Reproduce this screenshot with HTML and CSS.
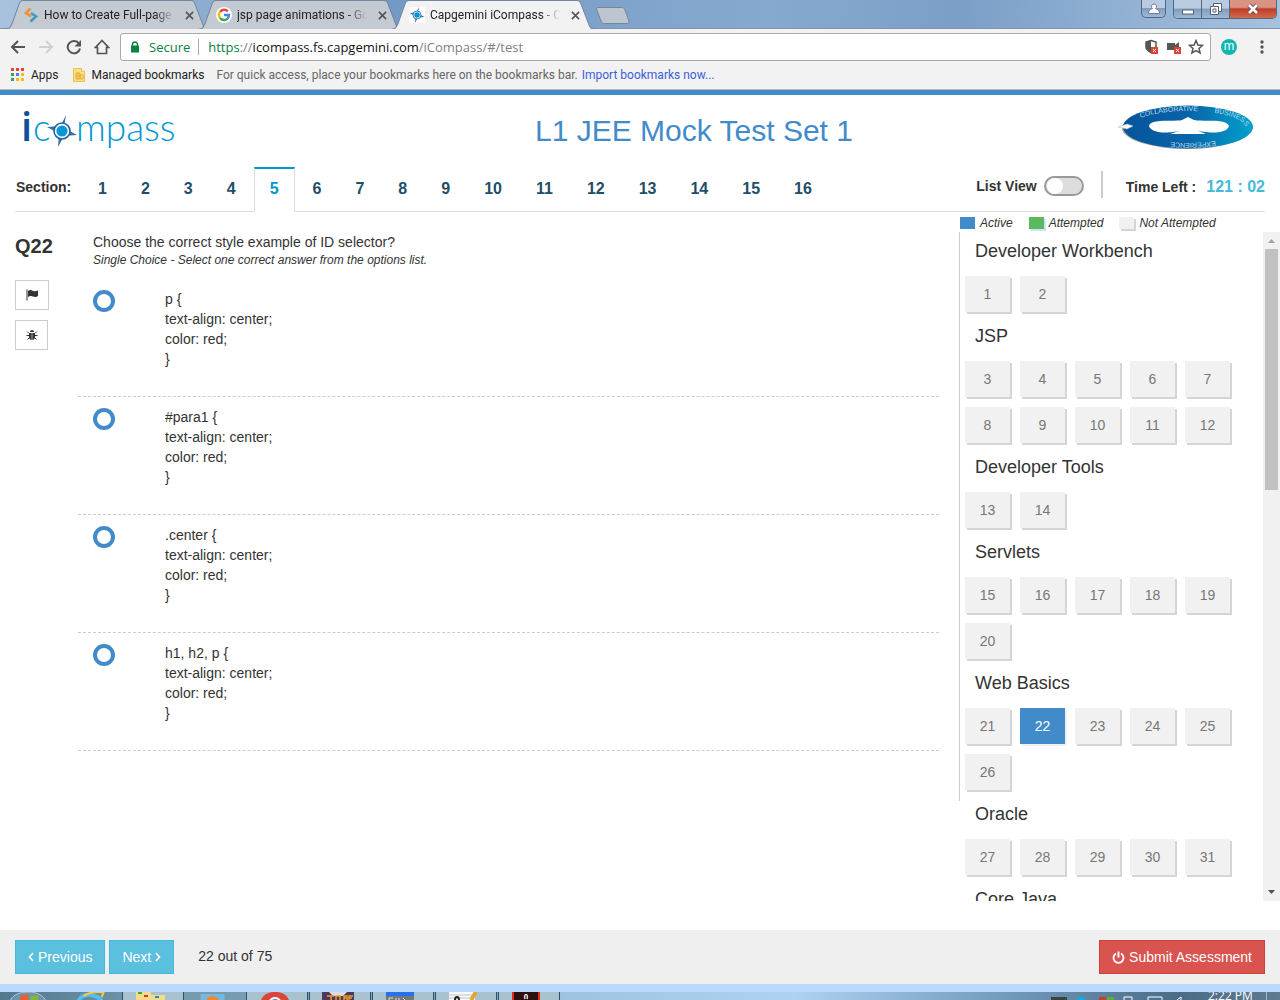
FILE: index.html
```html
<!DOCTYPE html>
<html lang="en">
<head>
<meta charset="utf-8">
<title>Capgemini iCompass - L1 JEE Mock Test Set 1</title>
<link rel="stylesheet" href="styles.css">
</head>
<body>
<svg class="defs" width="0" height="0" aria-hidden="true">
  <defs>
    <symbol id="compass" viewBox="0 0 30 32">
      <path d="M19 0 17 12 13 12ZM30 20 17 21 19 14ZM11 32 12 19 17 21ZM0 12 13 11 11 18Z" fill="#3570a8"/>
      <circle cx="15" cy="16" r="8" fill="#fff" stroke="#2c5f9c" stroke-width="1.6"/>
      <circle cx="15" cy="16" r="5.6" fill="#0098d4"/>
    </symbol>
    <symbol id="cross" viewBox="0 0 10 10"><path d="M1 1 9 9M9 1 1 9" stroke="#555" stroke-width="1.8"/></symbol>
  </defs>
</svg>

<div class="browser">
  <div class="tabstrip">
    <div class="tab tab-first">
      <svg class="tab-shape" viewBox="0 0 204 28" preserveAspectRatio="none"><path d="M0 28.500C4 28 5 27 7 23L14 4C15 1 16 .5 18 .5H186C188 .5 189 1 190 4L198 24C199 27 200 28 204 28.500" fill="#c3cad1" stroke="#73869d"/></svg>
      <svg class="favicon" viewBox="0 0 16 16"><path d="M7.500 1.500 3 6 8 9.500" fill="none" stroke="#f29132" stroke-width="2.600"/><path d="M8 6 13 9.500 7.500 14.500" fill="none" stroke="#3a9cc0" stroke-width="2.600"/></svg>
      <span class="tab-title">How to Create Full-page</span>
      <svg class="tab-close"><use href="#cross"/></svg>
    </div>
    <div class="tab">
      <svg class="tab-shape" viewBox="0 0 204 28" preserveAspectRatio="none"><path d="M0 28.500C4 28 5 27 7 23L14 4C15 1 16 .5 18 .5H186C188 .5 189 1 190 4L198 24C199 27 200 28 204 28.500" fill="#c3cad1" stroke="#73869d"/></svg>
      <svg class="favicon" viewBox="0 0 16 16"><circle cx="8" cy="8" r="8" fill="#fff"/><g fill="none" stroke-width="2.400"><path d="M11.800 4.400A5 5 0 0 0 4 5" stroke="#ea4335"/><path d="M4 5A5 5 0 0 0 4 11" stroke="#fbbc05"/><path d="M4 11A5 5 0 0 0 11.500 11.700" stroke="#34a853"/><path d="M11.500 11.700A5 5 0 0 0 13 8H8" stroke="#4285f4"/></g></svg>
      <span class="tab-title">jsp page animations - Go</span>
      <svg class="tab-close"><use href="#cross"/></svg>
    </div>
    <div class="tab tab-active">
      <svg class="tab-shape" viewBox="0 0 204 28" preserveAspectRatio="none"><path d="M0 28.500C4 28 5 27 7 23L14 4C15 1 16 .5 18 .5H186C188 .5 189 1 190 4L198 24C199 27 200 28 204 28.500" fill="#f2f2f2" stroke="#73869d"/></svg>
      <svg class="favicon favicon-white"><use href="#compass"/></svg>
      <span class="tab-title">Capgemini iCompass - C</span>
      <svg class="tab-close"><use href="#cross"/></svg>
    </div>
    <svg class="new-tab" viewBox="0 0 34 17"><path d="M1 .5H25C27 .5 28 1 29 3L33 14C33 16 32 16.500 31 16.500H9C7 16.500 6 16 5 14L.5 2Z" fill="#bdc6d0" stroke="#74869d"/></svg>
    <div class="window-controls">
      <button class="win user" aria-label="User"><svg width="12" height="12" viewBox="0 0 12 12"><path d="M6 1a2.500 2.500 0 0 1 1.500 4.500C10 6 11.500 8 11.500 10.500H.5C.5 8 2 6 4.500 5.500A2.500 2.500 0 0 1 6 1Z" fill="#fff" stroke="#596a80" stroke-width=".8"/></svg></button>
      <div class="win-group">
        <button class="win" aria-label="Minimize"><svg width="12" height="12" viewBox="0 0 12 12"><rect x=".5" y="7" width="11" height="4" fill="#fff" stroke="#53627a"/></svg></button>
        <button class="win" aria-label="Restore"><svg width="12" height="12" viewBox="0 0 12 12"><path d="M3.500.5H11.500V8.500H8.500V11.500H.5V3.500H3.500Z" fill="#fff" stroke="#53627a"/><path d="M3 6H6V9H3ZM3.500 3.500H8.500V8.500" fill="none" stroke="#53627a"/></svg></button>
        <button class="win win-close" aria-label="Close"><svg width="12" height="12" viewBox="0 0 12 12"><path d="M2 2 10 10M10 2 2 10" stroke="#5c3c48" stroke-width="4.400"/><path d="M2 2 10 10M10 2 2 10" stroke="#fff" stroke-width="2.800"/></svg></button>
      </div>
    </div>
  </div>

  <div class="toolbar">
    <button class="tool" aria-label="Back"><svg viewBox="0 0 16 16"><path d="M15 8H2M8 2 2 8 8 14" fill="none" stroke="#555" stroke-width="2"/></svg></button>
    <button class="tool" aria-label="Forward"><svg viewBox="0 0 16 16"><path d="M1 8H14M8 2 14 8 8 14" fill="none" stroke="#d0d0d0" stroke-width="2"/></svg></button>
    <button class="tool" aria-label="Reload"><svg viewBox="0 0 16 16"><path d="M13 4.500A6.200 6.200 0 1 0 14 9.500" fill="none" stroke="#555" stroke-width="2"/><path d="M15 1V7.500H8.500Z" fill="#555"/></svg></button>
    <button class="tool" aria-label="Home"><svg viewBox="0 0 16 16"><path d="M8 1.500 1.500 8.500H3.500V14.500H12.500V8.500H14.500Z" fill="none" stroke="#555" stroke-width="1.700"/></svg></button>
    <div class="address">
      <svg class="lock" viewBox="0 0 8 12"><path d="M1.500 5V3.500A2.500 2.500 0 0 1 6.500 3.500V5" fill="none" stroke="#0b8043" stroke-width="1.400"/><rect y="4.500" width="8" height="7" fill="#0b8043"/></svg>
      <span class="secure">Secure</span>
      <span class="url"><span class="secure-scheme">https</span>://<span class="host">icompass.fs.capgemini.com</span>/iCompass/#/test</span>
      <svg class="addr-icon" viewBox="0 0 16 16"><path d="M7 1.500 12 3V8C12 10 9 12.500 7 13.500 4 12 2 10 2 8V3Z" fill="#fff" stroke="#555" stroke-width="1.500"/><path d="M7 1V14C4 12 2 10 2 8V3Z" fill="#555"/><rect x="7" y="8" width="7" height="7" fill="#db4437"/><path d="M9 10 12 13M12 10 9 13" stroke="#fff"/></svg>
      <svg class="addr-icon" viewBox="0 0 16 16"><path d="M1 4H9V6L13 3V11H1Z" fill="#555"/><rect x="8" y="8" width="7" height="7" fill="#db4437"/><path d="M10 10 13 13M13 10 10 13" stroke="#fff"/></svg>
      <svg class="addr-icon" viewBox="0 0 16 16"><path d="M8 1.500 9.900 6 14.500 6.400 11 9.500 12.100 14 8 11.600 3.900 14 5 9.500 1.500 6.400 6.100 6Z" fill="none" stroke="#555" stroke-width="1.500"/></svg>
    </div>
    <span class="avatar">m</span>
    <button class="menu" aria-label="Menu"><svg width="4" height="14" viewBox="0 0 4 14" fill="#555"><circle cx="2" cy="2" r="1.700"/><circle cx="2" cy="7" r="1.700"/><circle cx="2" cy="12" r="1.700"/></svg></button>
  </div>

  <div class="bookmarks">
    <svg width="13" height="13" viewBox="0 0 13 13"><path d="M0 0h3v3H0zM5 0h3v3H5zM10 0h3v3h-3z" fill="#ea4335"/><path d="M0 5h3v3H0z" fill="#34a853"/><path d="M5 5h3v3H5z" fill="#4285f4"/><path d="M10 5h3v3h-3zM10 10h3v3h-3zM5 10h3v3H5z" fill="#fbbc05"/><path d="M0 10h3v3H0z" fill="#34a853"/></svg>
    <span class="bookmark-apps">Apps</span>
    <svg width="12" height="14" viewBox="0 0 12 14"><path d="M.5.500H8.500V3H11.500V13.500H.5Z" fill="#fddf7f" stroke="#e9c250"/><path d="M3 5H7V11H3ZM7 7H10V11H7ZM3 8H7M5 5V11" fill="none" stroke="#dfae37"/></svg>
    <span class="bookmark-managed">Managed bookmarks</span>
    <span class="bookmark-hint">For quick access, place your bookmarks here on the bookmarks bar.</span>
    <a class="bookmark-link" href="#import">Import bookmarks now...</a>
  </div>
</div>

<div class="app">
  <header class="app-header">
    <svg class="logo" width="160" height="48" viewBox="0 0 160 48" role="img" aria-label="icompass">
      <text class="logo-i" x="5" y="34">i</text>
      <text class="logo-text" x="17" y="34">c</text>
      <use href="#compass" x="31" y="8" width="30" height="32"/>
      <text class="logo-text" x="60" y="34">mpass</text>
    </svg>
    <h1 class="title">L1 JEE Mock Test Set 1</h1>
    <svg class="badge" width="137" height="46" viewBox="0 0 137 46" role="img" aria-label="Collaborative Business Experience">
      <defs>
        <linearGradient id="oval"><stop offset="0" stop-color="#06549b"/><stop offset=".5" stop-color="#0864a8"/><stop offset="1" stop-color="#00a2cc"/></linearGradient>
        <path id="ring" d="M13 23A57 16 0 0 1 127 23A57 16 0 0 1 13 23"/>
      </defs>
      <ellipse cx="69" cy="24" rx="65" ry="21" fill="#777" opacity=".7"/>
      <ellipse cx="70" cy="23" rx="65" ry="21.500" fill="url(#oval)"/>
      <path d="M0 23 9 20 15 22 9 25Z" fill="#fff" stroke="#bbb" stroke-width=".6"/>
      <path d="M31 22C32 14 57 18 64 16L70 13 76 16C88 18 108 14 111 22 109 31 86 29 78 26L88 30H52L64 26C56 29 34 31 31 22Z" fill="#fff"/>
      <text class="badge-text"><textPath href="#ring" startOffset="14">COLLABORATIVE</textPath></text>
      <text class="badge-text"><textPath href="#ring" startOffset="88">BUSINESS</textPath></text>
      <text class="badge-text"><textPath href="#ring" startOffset="158">EXPERIENCE</textPath></text>
    </svg>
  </header>

  <nav class="sections">
    <span class="sections-label">Section:</span>
    <ul class="section-tabs">
      <li><a href="#s1">1</a></li><li><a href="#s2">2</a></li><li><a href="#s3">3</a></li><li><a href="#s4">4</a></li>
      <li><a class="current" href="#s5">5</a></li><li><a href="#s6">6</a></li><li><a href="#s7">7</a></li><li><a href="#s8">8</a></li>
      <li><a href="#s9">9</a></li><li><a href="#s10">10</a></li><li><a href="#s11">11</a></li><li><a href="#s12">12</a></li>
      <li><a href="#s13">13</a></li><li><a href="#s14">14</a></li><li><a href="#s15">15</a></li><li><a href="#s16">16</a></li>
    </ul>
    <label class="list-view" for="list-view">List View</label>
    <input class="switch" type="checkbox" id="list-view">
    <span class="divider"></span>
    <span class="time-label">Time Left :</span>
    <span class="time">121 : 02</span>
  </nav>

  <main class="content">
    <aside class="question-tools">
      <h2 class="question-number">Q22</h2>
      <button class="icon-button" aria-label="Flag question"><svg width="12" height="12" viewBox="0 0 12 12"><path d="M.5.500H1.500V11.500H.5ZM2 2C4 .5 6 1 7 2 9 2.500 10 2 12 1.500V7C10 8.500 8.500 8 7 7.500 5 6.500 4 7 2 8Z" fill="#333"/></svg></button>
      <button class="icon-button icon-button-small" aria-label="Report a bug"><svg width="12" height="12" viewBox="0 0 12 12"><path d="M4 3A2 2 0 0 1 8 3ZM3 4H5.700V11C4 11 3 9.500 3 8ZM6.300 4H9V8C9 9.500 8 11 6.300 11Z" fill="#333"/><path d="M1 2.500 3 4.500M11 2.500 9 4.500M.5 6.500H3M11.500 6.500H9M1.500 10.500 3.500 8.500M10.500 10.500 8.500 8.500" stroke="#333"/></svg></button>
    </aside>

    <section class="question">
      <div class="prompt">
        <p class="prompt-text">Choose the correct style example of ID selector?</p>
        <p class="prompt-hint">Single Choice - Select one correct answer from the options list.</p>
      </div>
      <div class="option"><input type="radio" name="answer" id="a1"><label for="a1">p {<br>text-align: center;<br>color: red;<br>}</label></div>
      <div class="option"><input type="radio" name="answer" id="a2"><label for="a2">#para1 {<br>text-align: center;<br>color: red;<br>}</label></div>
      <div class="option"><input type="radio" name="answer" id="a3"><label for="a3">.center {<br>text-align: center;<br>color: red;<br>}</label></div>
      <div class="option"><input type="radio" name="answer" id="a4"><label for="a4">h1, h2, p {<br>text-align: center;<br>color: red;<br>}</label></div>
    </section>

    <aside class="overview">
      <div class="legend">
        <span class="swatch swatch-active"></span><span class="legend-text">Active</span>
        <span class="swatch swatch-attempted"></span><span class="legend-text">Attempted</span>
        <span class="swatch swatch-open"></span><span class="legend-text">Not Attempted</span>
      </div>
      <div class="palette">
        <div class="rule"></div>
        <div class="groups">
          <h3>Developer Workbench</h3>
          <div class="numbers"><button>1</button><button>2</button></div>
          <h3>JSP</h3>
          <div class="numbers"><button>3</button><button>4</button><button>5</button><button>6</button><button>7</button><button>8</button><button>9</button><button>10</button><button>11</button><button>12</button></div>
          <h3>Developer Tools</h3>
          <div class="numbers"><button>13</button><button>14</button></div>
          <h3>Servlets</h3>
          <div class="numbers"><button>15</button><button>16</button><button>17</button><button>18</button><button>19</button><button>20</button></div>
          <h3>Web Basics</h3>
          <div class="numbers"><button>21</button><button class="active">22</button><button>23</button><button>24</button><button>25</button><button>26</button></div>
          <h3>Oracle</h3>
          <div class="numbers"><button>27</button><button>28</button><button>29</button><button>30</button><button>31</button></div>
          <h3>Core Java</h3>
        </div>
        <div class="scrollbar">
          <svg class="arrow" viewBox="0 0 17 17"><path d="M5 11H12L8.500 7Z" fill="#a3a3a3"/></svg>
          <div class="thumb"></div>
          <svg class="arrow" viewBox="0 0 17 17"><path d="M5 6H12L8.500 10Z" fill="#505050"/></svg>
        </div>
      </div>
    </aside>
  </main>

  <footer class="footer">
    <button class="btn btn-info"><svg width="6" height="10" viewBox="0 0 6 10"><path d="M5 1 1.500 5 5 9" fill="none" stroke="#fff" stroke-width="1.600"/></svg>Previous</button>
    <button class="btn btn-info">Next<svg width="6" height="10" viewBox="0 0 6 10"><path d="M1 1 4.500 5 1 9" fill="none" stroke="#fff" stroke-width="1.600"/></svg></button>
    <span class="progress">22 out of 75</span>
    <button class="btn btn-danger"><svg width="13" height="13" viewBox="0 0 13 13"><path d="M4 2.500A5 5 0 1 0 9 2.500M6.500 .5V6.500" fill="none" stroke="#fff" stroke-width="1.900"/></svg>Submit Assessment</button>
  </footer>
</div>

<div class="taskbar">
  <svg class="task-icon task-pinned" viewBox="0 0 60 8"><path d="M10 8C13 2 20 0 28 0S42 3 45 8" fill="#6d93b1" stroke="#a9c7dc"/><path d="M19 8 21 3 28 2V8Z" fill="#e8622c"/><path d="M30 4 38 3V8H30Z" fill="#83b63a"/></svg>
  <svg class="task-icon task-pinned" viewBox="0 0 60 8"><path d="M17 9C20 3 26 2 30 3S38 5 40 9" fill="none" stroke="#57bdf0" stroke-width="4"/><path d="M22 4C28 0 38-1 42 1L40 5" fill="none" stroke="#f3cd3d" stroke-width="2"/></svg>
  <div class="task"><svg class="task-icon" viewBox="0 0 60 8"><path d="M13 0H28V3H42V8H13Z" fill="#f4dc8c"/><path d="M15 0h4v2h-4z" fill="#2eaf3c"/><path d="M21 3h4v2h-4z" fill="#d33b27"/><path d="M32 4h4v2h-4z" fill="#3482d4"/></svg></div>
  <svg class="task-icon task-pinned" viewBox="0 0 60 8"><rect x="15" y="2" width="24" height="8" fill="#76b9df"/><circle cx="27" cy="11" r="7" fill="#f08831"/></svg>
  <div class="task"><svg class="task-icon" viewBox="0 0 60 8"><path d="M14 8C17 1 23 0 28 0S39 1 42 8Z" fill="#dc4437"/><circle cx="28" cy="12" r="6" fill="#4285f4" stroke="#fff" stroke-width="2"/></svg></div>
  <div class="task"><svg class="task-icon" viewBox="0 0 60 8"><rect x="12" width="32" height="8" fill="#493b5d"/><path d="M19 0H37L33 4H23Z" fill="#ddd"/><path d="M17 4H24M21 4V8M26 8V4H30V8M37 8V4H34V8M43 4H39V8M34 6H37M39 6H42" fill="none" stroke="#f29a2a" stroke-width="1.500"/></svg></div>
  <div class="task"><svg class="task-icon" viewBox="0 0 60 8"><rect x="13" width="28" height="8" fill="#777"/><path d="M13 0h28v4H13z" fill="#2671ee"/><path d="M16 8V6H20M23 6V8M26 8V6M30 6 32 8" fill="none" stroke="#ddd"/></svg></div>
  <div class="task"><svg class="task-icon" viewBox="0 0 60 8"><path d="M13 0h26v8H13z" fill="#fafafa"/><path d="M13 3h26M13 6h26" stroke="#b4c7cf"/><path d="M40 0 35 8" stroke="#e3a72c" stroke-width="4"/><path d="M19 8C19 4 23 4 23 8" fill="none" stroke="#222" stroke-width="2"/></svg></div>
  <div class="task"><svg class="task-icon" viewBox="0 0 60 8"><path d="M13 0h28v8H13z" fill="#e6281d"/><path d="M15 0h24v8H15z" fill="#2d1111"/><path d="M26 7C24 1 30 1 28 7" fill="none" stroke="#ddd" stroke-width="1.500"/></svg></div>
  <svg class="tray" width="230" height="8" viewBox="0 0 230 8"><path d="M1 5h16v3H1z" fill="#38443f"/><circle cx="31" cy="10" r="5" fill="#00aff0"/><path d="M49 5h7v3h-7z" fill="#d03c26"/><path d="M57 5h7v3h-7z" fill="#61ac2e"/><path d="M74 8V5h8v3M98 8V5h14v3M127 8 131 5V8" fill="none" stroke="#fff"/><text class="clock" x="158" y="8">2:22 PM</text><path d="M216.500 0V8" stroke="#a7b9c7"/></svg>
</div>
</body>
</html>
```
FILE: styles.css
```css
* { box-sizing: border-box; }

body {
  margin: 0;
  height: 100vh;
  min-height: 700px;
  display: flex;
  flex-direction: column;
  overflow: hidden;
  background: #fff;
  color: #333;
  font: 14px/20px "Liberation Sans", Arial, sans-serif;
}

button { font: inherit; padding: 0; border: 0; background: none; }
h1, h2, h3, p, ul { margin: 0; padding: 0; }
h1, h2, h3 { font-weight: normal; }
.defs { position: absolute; }

/* Browser window */
.browser { flex: none; background: #f2f2f2; font-family: Roboto, "Open Sans", sans-serif; font-size: 12px; }

.tabstrip {
  height: 29px;
  display: flex;
  align-items: flex-start;
  padding-left: 5px;
  background: linear-gradient(100deg, #a9c3de 0, #7399c4 30%, #86a9cf 60%, #7c9fc8 75%, #a5c2de 100%);
  border-bottom: 1px solid #8292a8;
}
.tab { position: relative; width: 204px; height: 29px; margin-right: -11px; padding: 1px 15px 0 18px; display: flex; align-items: center; }
.tab-active { z-index: 1; }
.tab-shape { position: absolute; left: 0; top: 0; width: 100%; height: 29px; }
.favicon { position: relative; flex: none; width: 16px; height: 16px; margin-right: 5px; }
.favicon-white { background: #fff; }
.tab-title {
  position: relative;
  flex: 1;
  overflow: hidden;
  white-space: nowrap;
  color: #222;
  -webkit-mask-image: linear-gradient(90deg, #000 85%, transparent);
  mask-image: linear-gradient(90deg, #000 85%, transparent);
}
.tab-close { position: relative; flex: none; width: 9px; height: 9px; margin-left: 11px; }
.new-tab { width: 34px; height: 17px; margin: 7px 0 0 12px; }

.window-controls { margin-left: auto; display: flex; gap: 7px; padding-right: 3px; }
.win { width: 28px; height: 18px; display: flex; align-items: center; justify-content: center; background: linear-gradient(#b8cbe0 45%, #819dbd 50%, #9db9d7); border-right: 1px solid #526682; }
.user { width: 25px; border: 1px solid #526682; border-top: 0; border-radius: 0 0 5px 5px; }
.win-group { display: flex; border: 1px solid #526682; border-top: 0; border-radius: 0 0 5px 5px; overflow: hidden; }
.win-close { width: 46px; border: 0; background: linear-gradient(#d99384 40%, #bd3e26 50%, #d4694e); }

.toolbar { height: 36px; display: flex; align-items: center; padding: 0 10px; }
.tool { width: 16px; height: 16px; margin-right: 12px; }
.tool svg { display: block; width: 16px; height: 16px; }
.address { flex: 1; height: 28px; margin: 0 10px 0 -2px; padding: 0 6px 0 10px; display: flex; align-items: center; background: #fff; border: 1px solid #a9a9a9; border-radius: 3px; font-family: "Open Sans", sans-serif; font-size: 13px; }
.lock { width: 8px; height: 12px; margin-right: 10px; }
.secure { color: #0b8043; padding-right: 8px; border-right: 1px solid #aaa; line-height: 16px; }
.url { flex: 1; padding-left: 9px; color: #808080; }
.secure-scheme { color: #0b8043; }
.host { color: #111; }
.addr-icon { width: 16px; height: 16px; margin-left: 6px; }
.avatar { width: 16px; height: 16px; border-radius: 8px; background: #10b8ae; color: #fff; line-height: 15px; text-align: center; }
.menu { margin: 0 6px 0 23px; display: flex; }

.bookmarks { height: 25px; display: flex; align-items: center; padding: 0 11px 5px; border-bottom: 1px solid #b9b9b9; }
.bookmark-apps { margin: 0 14px 0 7px; color: #222; }
.bookmark-managed { margin: 0 12px 0 7px; color: #222; }
.bookmark-hint { color: #666; margin-right: 4px; }
.bookmark-link { color: #3b61d8; text-decoration: none; }

/* Assessment page */
.app { flex: 1; min-height: 0; display: flex; flex-direction: column; border-top: 5px solid #428bca; }

.app-header { flex: none; height: 72px; padding: 0 25px 0 16px; display: flex; align-items: center; }
.title { flex: 1; padding-left: 94px; text-align: center; font-size: 30px; line-height: 36px; color: #428bca; }
.badge { margin-bottom: 8px; }
.logo-i { font: 600 40px "Open Sans", sans-serif; fill: #0a4f9c; }
.logo-text { font: 300 37px Lato, sans-serif; fill: #0098d4; }
.badge-text { font: 7px "Liberation Sans", sans-serif; fill: #b9d9ec; }

.sections { flex: none; height: 45px; margin: 0 15px; display: flex; align-items: center; border-bottom: 1px solid #ddd; font-weight: bold; }
.sections-label { width: 67px; padding-left: 1px; padding-bottom: 4px; }
.section-tabs { list-style: none; display: flex; gap: 2px; margin-right: auto; }
.section-tabs a { display: block; height: 45px; padding: 10px 15px; border: 1px solid transparent; border-top-width: 2px; color: #1f4e68; font-size: 16px; text-decoration: none; }
.section-tabs .current { background: #fff; border-color: #0098cc #ddd transparent; color: #0098cc; }
.list-view { margin-right: 7px; padding-bottom: 6px; }
.switch { appearance: none; width: 40px; height: 20px; margin: 0 17px 6px 0; padding: 0 0 0 1px; border: 2px solid #999; border-radius: 10px; background: #ddd; }
.switch::before { content: ""; display: block; width: 16px; height: 16px; border-radius: 8px; background: #fff; }
.divider { width: 2px; height: 27px; margin: 0 23px 9px 0; background: #ccc; }
.time-label { margin-right: 10px; padding-bottom: 4px; }
.time { padding-bottom: 5px; font-size: 16px; color: #46b8da; }

.content { flex: 1; min-height: 0; padding: 0 0 29px 15px; display: flex; }
.question-tools { width: 63px; padding-top: 22px; }
.question-number { margin-bottom: 22px; font-size: 20px; line-height: 24px; font-weight: bold; }
.icon-button { width: 34px; height: 30px; margin-bottom: 10px; display: flex; align-items: center; justify-content: center; border: 1px solid #ccc; }
.icon-button-small { width: 33px; }

.question { flex: 1; margin-right: 20px; }
.prompt { height: 67px; padding: 20px 15px 0; }
.prompt-hint { font-size: 12px; line-height: 16px; font-style: italic; }
.option { display: flex; gap: 50px; padding: 10px 15px 27px; border-bottom: 1px dashed #ccc; }
.option input { appearance: none; flex: none; width: 22px; height: 22px; margin: 1px 0 0; border: 4px solid #428bca; border-radius: 50%; background: #fff; }

.overview { width: 321px; display: flex; flex-direction: column; }
.legend { flex: none; height: 20px; padding: 2px 0 0 1px; display: flex; align-items: center; font-size: 12px; font-style: italic; }
.swatch { width: 15px; height: 12px; margin-right: 5px; }
.legend-text { margin-right: 16px; }
.swatch-active { background: #428bca; }
.swatch-attempted { background: #5cb85c; box-shadow: 2px 2px #cce4fb; }
.swatch-open { background: #f1f1f1; box-shadow: 2px 2px #d5d5d5; }
.palette { flex: 1; min-height: 0; display: flex; }
.rule { width: 1px; margin-bottom: 100px; background: #ccc; }
.groups { flex: 1; overflow: hidden; }
.groups h3 { padding-left: 15px; font-size: 18px; line-height: 39px; }
.numbers { display: flex; flex-wrap: wrap; gap: 10px; padding: 5px; }
.numbers button { width: 45px; height: 36px; background: #f1f1f1; color: #777; box-shadow: 2px 2px #d5d5d5; }
.numbers .active { background: #428bca; color: #fff; box-shadow: 2px 2px #f1f1f1; }
.scrollbar { width: 17px; display: flex; flex-direction: column; background: #f1f1f1; }
.arrow { flex: none; width: 17px; height: 17px; }
.arrow:last-child { margin-top: auto; }
.thumb { height: 36%; min-height: 20px; margin: 0 2px; background: #c1c1c1; }

.footer { flex: none; height: 54px; padding: 10px 15px; display: flex; gap: 4px; background: #efefef; }
.btn { height: 34px; padding: 0 12px; display: flex; align-items: center; gap: 4px; border: 1px solid; color: #fff; }
.btn-info { background: #5bc0de; border-color: #46b8da; }
.btn-danger { background: #d9534f; border-color: #d43f3a; }
.progress { margin: 6px auto 0 20px; }

/* Desktop taskbar */
.taskbar { flex: none; height: 16px; display: flex; border-top: 8px solid #b9dafd; background: linear-gradient(90deg, #53788f, #7398ac 12%, #86abc0 40%, #9fc2e0 44%, #b0d2f2 62%, #739cbd 78%, #4b6c87 92%, #5c7b91); }
.task-icon { display: block; width: 60px; height: 8px; overflow: hidden; }
.task-pinned { width: 61px; }
.task { margin-right: 1px; border: solid #2f5068; border-width: 0 1px; background: #a9c2d0; }
.tray { margin-left: auto; }
.clock { font: 12px "Open Sans", sans-serif; fill: #fff; }
```
